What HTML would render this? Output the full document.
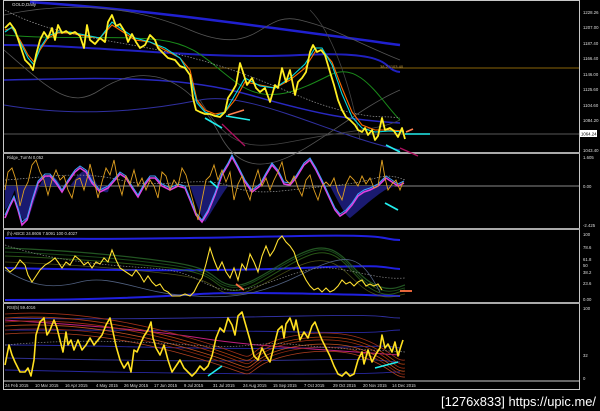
<!DOCTYPE html>
<html><head><meta charset="utf-8"><style>
html,body{margin:0;padding:0;background:#000;width:600px;height:411px;overflow:hidden}
svg{display:block}
text{font-family:"Liberation Sans",sans-serif}
</style></head><body>
<svg width="600" height="411" viewBox="0 0 600 411" xmlns="http://www.w3.org/2000/svg">
<rect width="600" height="411" fill="#000"/>
<rect x="3.5" y="0.5" width="576" height="389" fill="none" stroke="#c8c8c8" stroke-width="1"/>
<line x1="3" y1="153" x2="580" y2="153" stroke="#aaa" stroke-width="2"/>
<line x1="3" y1="229" x2="580" y2="229" stroke="#aaa" stroke-width="2"/>
<line x1="3" y1="303" x2="580" y2="303" stroke="#aaa" stroke-width="2"/>
<line x1="3" y1="381" x2="580" y2="381" stroke="#ccc" stroke-width="1"/>

<g fill="none">
<line x1="4" y1="68" x2="579" y2="68" stroke="#b8860b" stroke-width="0.8"/>
<line x1="4" y1="134" x2="579" y2="134" stroke="#777" stroke-width="0.8"/>
<path d="M30,2 C150,10 250,25 400,45" stroke="#2020d0" stroke-width="2.5"/>
<path d="M4,45 C100,45 200,60 300,55 S380,70 400,72" stroke="#2020c0" stroke-width="2"/>
<path d="M4,80 C100,78 180,75 250,95 S350,120 400,123" stroke="#2828c0" stroke-width="1.5"/>
<path d="M4,105 C80,118 150,110 200,100 S330,135 400,150" stroke="#3030a0" stroke-width="1"/>
<path d="M4,50 C50,90 70,110 100,90 S180,60 220,135 S330,120 400,90" stroke="#555" stroke-width="0.8"/>
<path d="M4,15 C50,5 120,0 190,30 S260,10 300,20 S350,40 400,60" stroke="#555" stroke-width="0.8"/>
<path d="M200,100 C230,150 250,150 300,140 S380,130 400,120" stroke="#444" stroke-width="0.8"/>
<path d="M310,10 C330,30 350,80 360,140" stroke="#444" stroke-width="0.8"/>
<path d="M5,35 C60,40 120,35 160,40 S210,65 240,85 S300,90 330,75 S380,100 400,120" stroke="#1a8a1a" stroke-width="1"/>
<path d="M5,10 C60,40 130,40 200,60 S300,100 340,110 S380,115 400,118" stroke="#999" stroke-width="0.7" stroke-dasharray="1.5,1.5"/>
<polyline stroke="#ff6a00" stroke-width="1.1" points="5,30 12,28 20,40 28,55 34,62 40,50 48,38 58,33 70,33 85,36 100,38 112,25 120,30 135,40 150,42 165,50 180,58 190,70 197,100 205,110 215,114 225,112 235,100 245,82 260,85 275,88 290,80 305,68 315,52 322,50 332,62 342,88 352,112 362,125 375,130 390,130 404,131"/>
<polyline stroke="#00d8e0" stroke-width="1.1" points="5,32 12,27 20,42 28,58 34,65 40,48 48,36 58,32 70,32 85,35 100,38 112,22 120,28 135,38 150,42 165,48 180,58 190,75 197,103 205,112 215,116 225,112 235,95 245,78 260,86 275,88 290,78 305,64 315,48 322,48 332,65 342,94 352,117 362,128 375,132 390,131 404,132"/>
<polyline stroke="#ffee22" stroke-width="1.8" stroke-linejoin="round" points="5,28 10,23 15,30 20,45 25,60 30,65 33,70 36,55 40,40 44,32 48,38 52,28 55,40 58,25 62,33 66,31 70,34 75,32 80,36 84,48 87,25 90,40 95,44 100,38 105,42 108,22 112,15 116,26 120,24 125,32 128,42 132,34 136,42 140,48 145,45 150,35 155,40 158,48 162,52 168,58 175,60 180,66 185,68 190,75 193,98 196,110 200,112 205,114 210,114 215,116 220,117 225,112 228,98 232,92 236,85 240,63 243,72 247,85 252,78 256,88 260,92 265,88 270,102 275,85 278,88 282,68 286,82 290,70 295,95 298,82 302,78 306,72 310,52 313,45 317,52 321,50 325,55 330,72 334,85 338,100 342,110 346,117 350,120 355,125 358,130 362,132 365,128 368,135 372,130 375,140 378,136 382,118 385,130 390,128 394,131 398,137 402,128 405,139"/>
<line x1="244" y1="110" x2="228" y2="115" stroke="#ff8050" stroke-width="1.5"/>
<line x1="250" y1="120" x2="226" y2="116" stroke="#2ee" stroke-width="1.6"/>
<line x1="205" y1="118" x2="222" y2="128" stroke="#2ee" stroke-width="1.6"/>
<line x1="222" y1="124" x2="245" y2="146" stroke="#b01060" stroke-width="1.3"/>
<line x1="430" y1="134" x2="405" y2="134" stroke="#2ee" stroke-width="1.6"/>
<line x1="413" y1="129" x2="406" y2="132" stroke="#ff8050" stroke-width="1.6"/>
<line x1="386" y1="145" x2="400" y2="152" stroke="#2ee" stroke-width="1.6"/>
<line x1="400" y1="148" x2="418" y2="156" stroke="#b01060" stroke-width="1.3"/>
</g>
<text x="12" y="6" font-size="4.5" fill="#ddd">GOLD,Daily</text>
<text x="380" y="68" font-size="4" fill="#c9a040">38.2 1103.40</text>
<g font-size="4.3" fill="#ddd">
<text x="583" y="14">1228.26</text><text x="583" y="29">1207.00</text><text x="583" y="45">1187.40</text><text x="583" y="60">1166.40</text><text x="583" y="76">1146.00</text><text x="583" y="91">1125.60</text><text x="583" y="107">1104.60</text><text x="583" y="122">1084.20</text><text x="583" y="152">1043.40</text></g>
<rect x="580" y="130" width="17" height="7" fill="#fff"/><text x="581" y="135.5" font-size="4.3" fill="#000">1064.24</text>

<g fill="none">
<line x1="4" y1="186" x2="579" y2="186" stroke="#888" stroke-width="1"/>
<path d="M5,186 L5,210 C10,205 12,195 15,190 C18,210 22,225 28,220 C35,200 40,180 46,176 C52,172 58,180 62,188 L62,186Z M70,186 C75,180 80,170 88,170 C95,178 100,195 108,192 L110,186Z M190,186 C195,200 200,215 205,222 C210,215 218,200 228,186Z M330,186 C340,205 345,215 350,218 C358,212 370,200 385,190 L395,186Z" fill="#1a1a70" stroke="none"/>
<path d="M5,180 C40,178 80,170 120,180 S200,175 230,186 S280,190 330,186 S380,170 405,180" stroke="#999" stroke-width="0.7" stroke-dasharray="1.5,1.5"/>
<polyline stroke="#e040e0" stroke-width="1.6" points="5,218 10,206 14,198 18,210 22,225 27,220 32,202 38,183 45,176 50,176 56,183 62,192 68,182 75,172 80,168 86,172 92,183 100,192 108,188 115,180 120,174 126,178 132,188 138,197 144,186 150,178 155,178 162,186 170,190 178,186 185,188 190,200 196,215 202,222 208,212 215,195 222,175 228,165 232,157 238,168 245,182 252,192 260,186 266,175 272,165 278,172 284,184 290,185 296,178 304,165 310,160 316,170 322,182 328,195 335,210 340,216 346,212 352,205 358,196 364,192 370,190 378,186 386,178 392,182 398,186 404,183"/>
<polyline stroke="#40a0ff" stroke-width="1" points="5,215 10,204 14,196 18,208 22,222 27,218 32,200 38,181 45,174 50,174 56,181 62,190 68,180 75,170 80,166 86,170 92,181 100,190 108,186 115,178 120,172 126,176 132,186 138,195 144,184 150,176 155,176 162,184 170,188 178,184 185,186 190,198 196,213 202,220 208,210 215,193 222,173 228,163 232,155 238,166 245,180 252,190 260,184 266,173 272,163 278,170 284,182 290,183 296,176 304,163 310,158 316,168 322,180 328,193 335,208 340,214 346,210 352,203 358,194 364,190 370,188 378,184 386,176 392,180 398,184 404,181"/>
<polyline stroke="#e0a020" stroke-width="0.9" points="5,190 8,172 12,168 16,180 20,206 24,190 28,182 32,165 36,160 40,172 44,180 48,195 52,180 56,170 60,180 64,176 68,190 72,198 76,180 80,178 84,190 88,175 90,164 94,180 98,198 102,182 106,168 110,175 114,160 118,182 122,195 126,176 130,184 134,170 138,186 142,178 146,190 150,180 154,186 158,198 162,172 166,176 170,190 174,180 178,186 182,168 186,175 190,190 194,205 198,220 202,200 206,180 210,176 214,165 218,180 222,170 226,182 230,172 234,200 238,184 242,176 246,190 250,200 254,182 258,170 262,186 266,178 270,190 274,180 278,172 282,162 286,180 290,184 294,176 298,188 302,196 306,180 310,175 314,190 318,200 322,186 326,182 330,186 334,178 338,192 342,200 346,184 350,176 354,180 358,186 362,176 366,184 370,178 374,188 378,186 382,160 385,178 388,190 392,184 396,180 400,190 403,182"/>
<line x1="210" y1="181" x2="218" y2="188" stroke="#2ee" stroke-width="1.8"/>
<line x1="385" y1="203" x2="398" y2="210" stroke="#2ee" stroke-width="1.8"/>
</g>
<text x="7" y="159" font-size="4.2" fill="#ddd">Ridge_TurnN 0.052</text>
<g font-size="4.3" fill="#ddd"><text x="583" y="159">1.605</text><text x="583" y="188">0.00</text><text x="583" y="227">-2.425</text></g>

<g fill="none">
<path d="M5,238 C100,240 200,238 300,236 S380,240 400,240" stroke="#2020e0" stroke-width="2"/>
<path d="M5,268 C100,270 200,272 300,268 S380,268 400,269" stroke="#2020e0" stroke-width="2"/>
<path d="M5,300 C100,300 170,296 200,294 S300,293 400,296" stroke="#2020e0" stroke-width="2"/>
<path d="M5,248 C60,250 120,255 170,262 S210,280 230,285 S280,260 310,250 S350,270 370,282 S400,286 405,285" stroke="#2a6a2a" stroke-width="1.2" opacity="0.8"/>
<path d="M5,252 C60,254 120,258 170,265 S210,283 230,287 S280,263 310,252 S350,273 370,285 S400,288 405,288" stroke="#1f5a1f" stroke-width="1" opacity="0.8"/>
<path d="M5,256 C60,258 120,262 170,268 S210,285 230,290 S280,266 310,255 S350,275 370,288 S400,290 405,290" stroke="#3a7a20" stroke-width="1" opacity="0.7"/>
<path d="M5,262 C60,264 120,268 170,274 S210,290 230,294 S280,270 310,262 S350,282 370,292 S400,294 405,294" stroke="#6a7020" stroke-width="0.8" opacity="0.7"/>
<path d="M5,245 C50,260 100,265 150,268 S200,288 230,290 S300,265 330,268 S380,280 405,278" stroke="#888" stroke-width="0.7" stroke-dasharray="1.5,1.5"/>
<path d="M5,270 C30,285 50,290 80,282 S140,292 180,295 S250,300 300,275 S360,255 380,292" stroke="#506080" stroke-width="0.8"/>
<polyline stroke="#ffe030" stroke-width="1.1" points="5,267 10,272 15,268 20,260 25,265 28,275 32,282 36,276 40,270 45,265 50,262 55,258 58,262 62,268 66,262 70,265 75,256 80,260 84,265 88,262 92,268 96,262 100,264 104,258 108,262 112,250 116,260 120,268 126,272 132,276 136,270 140,275 144,282 148,276 152,282 156,286 160,284 164,290 168,292 172,296 176,296 180,296 185,294 190,296 194,292 198,284 202,278 206,264 210,248 214,260 218,270 222,262 226,272 230,278 234,268 238,280 242,264 246,270 250,254 254,262 258,272 262,256 266,246 270,256 274,250 278,240 282,236 286,242 290,246 294,252 298,264 302,272 306,280 310,286 314,290 318,288 322,292 326,288 330,292 334,290 338,286 342,280 346,284 350,282 354,286 358,282 362,280 366,286 370,284 374,286 378,284 382,290"/>
<line x1="236" y1="284" x2="244" y2="290" stroke="#ff7040" stroke-width="1.8"/>
<line x1="400" y1="291" x2="412" y2="291" stroke="#ff7040" stroke-width="1.8"/>
</g>
<text x="7" y="235" font-size="4.2" fill="#ddd">(h)-ABCE 24.8606 7.5091 100 0.4027</text>
<g font-size="4.3" fill="#ddd"><text x="583" y="236">100</text><text x="583" y="249">78.6</text><text x="583" y="261">61.8</text><text x="583" y="267">50</text><text x="583" y="274">38.2</text><text x="583" y="285">23.6</text><text x="583" y="301">0.00</text></g>

<g fill="none">
<path d="M5,318 C100,320 200,318 300,316 S380,318 400,318" stroke="#3030a0" stroke-width="0.9"/>
<path d="M5,330 C100,330 200,330 300,332 S380,330 400,330" stroke="#2828a0" stroke-width="0.9"/>
<path d="M5,345 C100,345 200,350 300,348 S380,345 400,348" stroke="#2828a0" stroke-width="0.9"/>
<path d="M5,358 C100,360 200,362 300,360 S380,362 400,362" stroke="#303090" stroke-width="0.9"/>
<path d="M5,370 C100,372 200,374 300,374 S380,372 400,372" stroke="#2828a0" stroke-width="0.9"/>
<path d="M5,320 C80,325 150,330 200,338 S300,348 400,355" stroke="#c02080" stroke-width="1"/>
<path d="M5,314 C60,310 120,318 190,338 S240,362 260,348 S330,328 360,338 S395,362 405,360" stroke="#a03018" stroke-width="0.8"/>
<path d="M5,318 C60,314 120,322 190,342 S240,366 260,352 S330,332 360,342 S395,366 405,364" stroke="#b04010" stroke-width="0.8"/>
<path d="M5,322 C60,318 120,325 190,345 S240,370 260,355 S330,335 360,345 S395,370 405,368" stroke="#a03010" stroke-width="0.8"/>
<path d="M5,326 C60,322 120,329 190,349 S240,373 260,359 S330,339 360,349 S395,373 405,371" stroke="#c05020" stroke-width="0.8"/>
<path d="M5,330 C60,326 120,332 190,352 S240,376 260,362 S330,342 360,352 S395,376 405,374" stroke="#902810" stroke-width="0.8"/>
<path d="M5,334 C60,330 120,336 190,356 S240,379 260,366 S330,346 360,356 S395,378 405,377" stroke="#b04020" stroke-width="0.8"/>
<path d="M5,345 C60,340 120,340 190,345 S250,340 300,345 S380,350 405,352" stroke="#888" stroke-width="0.7" stroke-dasharray="1.5,1.5"/>
<polyline stroke="#ffe020" stroke-width="1.6" stroke-linejoin="round" points="5,365 9,345 12,355 15,362 20,372 25,372 28,368 31,376 34,360 36,335 40,322 44,318 47,335 50,330 54,320 57,328 60,340 63,352 66,332 68,345 71,340 74,350 78,340 82,350 86,345 90,338 94,345 98,340 102,335 106,325 110,318 113,332 116,346 120,360 124,368 128,362 131,372 134,350 137,352 140,345 144,336 148,330 151,322 153,338 156,348 160,355 164,345 168,360 172,372 176,366 180,360 184,368 188,372 192,376 196,372 200,366 204,370 208,366 212,356 216,338 220,328 224,332 228,318 232,325 235,335 238,316 242,312 246,326 250,340 254,356 258,360 262,348 266,356 270,362 274,346 278,330 282,326 284,338 286,324 290,318 294,330 296,320 300,340 304,332 308,338 312,326 315,322 318,330 322,340 326,348 330,356 334,366 338,374 342,376 346,372 350,376 354,374 358,360 362,352 364,364 368,350 372,362 376,354 380,348 382,335 385,348 388,344 392,352 395,342 398,356 401,346 403,340"/>
<line x1="208" y1="376" x2="222" y2="366" stroke="#2ee" stroke-width="1.6"/>
<line x1="375" y1="368" x2="398" y2="362" stroke="#2ee" stroke-width="1.6"/>
</g>
<text x="7" y="309" font-size="4.2" fill="#ddd">RSI(5) 59.4016</text>
<g font-size="4.3" fill="#ddd"><text x="583" y="310">100</text><text x="583" y="357">32</text><text x="583" y="380">0</text></g>

<g font-size="4.2" fill="#ddd">
<text x="5" y="387">24 Feb 2015</text><text x="35" y="387">10 Mar 2015</text><text x="65" y="387">16 Apr 2015</text><text x="96" y="387">4 May 2015</text><text x="124" y="387">26 May 2015</text><text x="154" y="387">17 Jun 2015</text><text x="184" y="387">9 Jul 2015</text><text x="213" y="387">31 Jul 2015</text><text x="243" y="387">24 Aug 2015</text><text x="273" y="387">15 Sep 2015</text><text x="304" y="387">7 Oct 2015</text><text x="333" y="387">29 Oct 2015</text><text x="363" y="387">20 Nov 2015</text><text x="392" y="387">14 Dec 2015</text>
</g>
<text x="441" y="406" font-size="13" fill="#fff" font-family="Liberation Sans Narrow, Liberation Sans, sans-serif" textLength="155" lengthAdjust="spacingAndGlyphs">[1276x833] https://upic.me/</text>
</svg>
</body></html>
